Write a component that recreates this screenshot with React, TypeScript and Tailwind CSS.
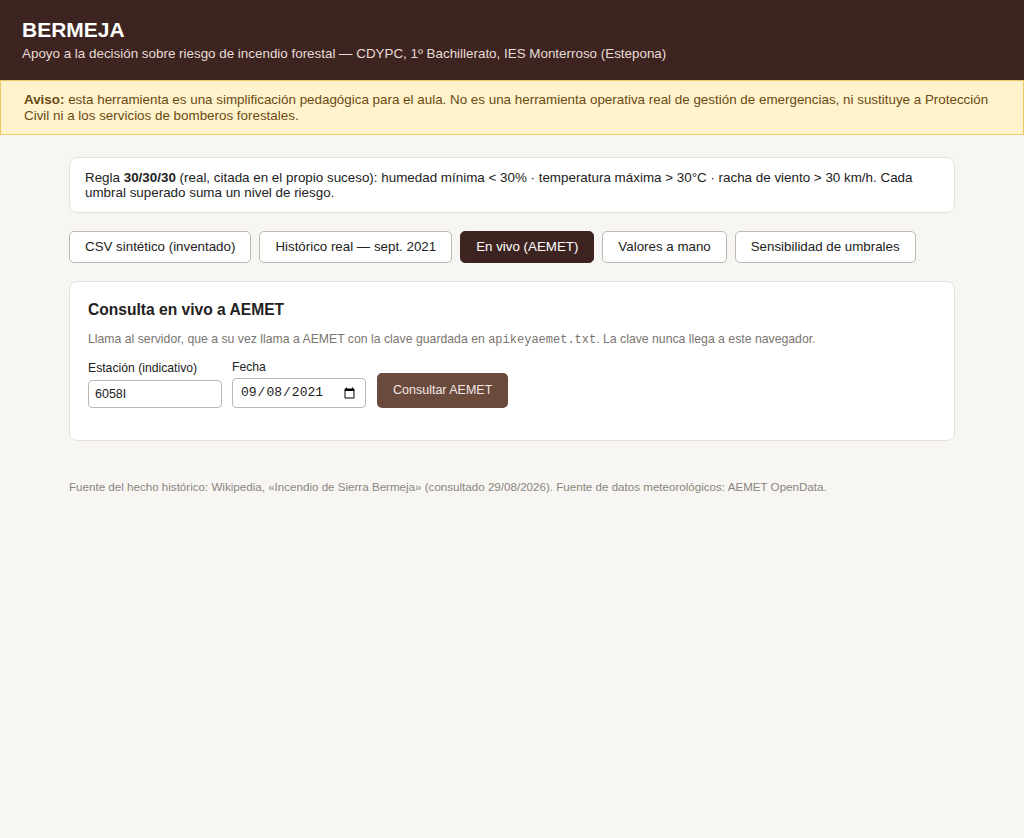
import React, { useState } from "react";

const tabs = [
  "CSV sintético (inventado)",
  "Histórico real — sept. 2021",
  "En vivo (AEMET)",
  "Valores a mano",
  "Sensibilidad de umbrales",
];

export default function App() {
  const [active, setActive] = useState(2);
  const [station, setStation] = useState("6058I");
  const [date, setDate] = useState("2021-09-08");

  return (
    <div className="min-h-[838px] bg-[#f8f6f2] text-[#222] font-['Liberation_Sans',Arial,sans-serif]">
      <header className="bg-[#3d2420] px-[22px] pt-[17px] pb-[18px] text-white">
        <h1 className="text-[21px] leading-[25px] font-bold">BERMEJA</h1>
        <p className="mt-[4px] text-[13.4px] leading-[16px] text-[#e8dcd6]">
          Apoyo a la decisión sobre riesgo de incendio forestal — CDYPC, 1º Bachillerato, IES Monterroso (Estepona)
        </p>
      </header>

      <div className="border border-[#e9c96a] bg-[#fff3cd] px-[23px] pt-[11px] pb-[10px] text-[13.4px] leading-[16px] text-[#6b4a12]">
        <strong>Aviso:</strong> esta herramienta es una simplificación pedagógica para el aula. No es una herramienta operativa real de gestión de emergencias, ni sustituye a Protección Civil ni a los servicios de bomberos forestales.
      </div>

      <main className="mx-auto w-[886px] pt-[22px]">
        <div className="rounded-[8px] border border-[#e6e1d9] bg-white px-[15px] py-[12px] text-[13.4px] leading-[15px] text-[#222]">
          Regla <strong>30/30/30</strong> (real, citada en el propio suceso): humedad mínima &lt; 30% · temperatura máxima &gt; 30°C · racha de viento &gt; 30 km/h. Cada umbral superado suma un nivel de riesgo.
        </div>

        <nav className="mt-[18px] flex gap-[8px]">
          {tabs.map((t, i) => (
            <button
              key={t}
              onClick={() => setActive(i)}
              className={
                i === active
                  ? "h-[32px] rounded-[5px] border border-[#3d2420] bg-[#3d2420] px-[15px] text-[13.33px] text-white"
                  : "h-[32px] rounded-[5px] border border-[#bdb8b2] bg-white px-[15px] text-[13.33px] text-[#222]"
              }
            >
              {t}
            </button>
          ))}
        </nav>

        <section className="mt-[18px] rounded-[8px] border border-[#e6e1d9] bg-white px-[18px] pt-[18px] pb-[32px]">
          <h2 className="text-[15.6px] leading-[20px] font-bold text-[#222]">Consulta en vivo a AEMET</h2>
          <p className="mt-[11px] text-[12.25px] leading-[16px] text-[#7a7570]">
            Llama al servidor, que a su vez llama a AEMET con la clave guardada en{" "}
            <code className="font-['Liberation_Mono',monospace] text-[12px]">apikeyaemet.txt</code>. La clave nunca llega a este navegador.
          </p>
          <div className="mt-[11px] flex items-end gap-[10px]">
            <label className="flex flex-col">
              <span className="text-[12.2px] leading-[16px] text-[#222]">Estación (indicativo)</span>
              <input
                value={station}
                onChange={(e) => setStation(e.target.value)}
                className="mt-[4px] h-[28px] w-[134px] rounded-[4px] border border-[#bdb8b2] bg-white px-[6px] text-[12.5px] text-[#222] outline-none"
              />
            </label>
            <label className="flex flex-col">
              <span className="text-[12.2px] leading-[16px] text-[#222]">Fecha</span>
              <input
                type="date"
                value={date}
                onChange={(e) => setDate(e.target.value)}
                className="mt-[3px] h-[30px] w-[134px] rounded-[4px] border border-[#bdb8b2] bg-white px-[7px] font-['Liberation_Mono',monospace] text-[13px] text-[#222] outline-none"
              />
            </label>
            <button className="ml-[1px] h-[35px] rounded-[5px] bg-[#6b4a3e] px-[16px] text-[12.5px] text-[#f1e8e4]">
              Consultar AEMET
            </button>
          </div>
        </section>

        <p className="mt-[39px] text-[11.6px] leading-[14px] text-[#8a8580]">
          Fuente del hecho histórico: Wikipedia, «Incendio de Sierra Bermeja» (consultado 29/08/2026). Fuente de datos meteorológicos: AEMET OpenData.
        </p>
      </main>
    </div>
  );
}
